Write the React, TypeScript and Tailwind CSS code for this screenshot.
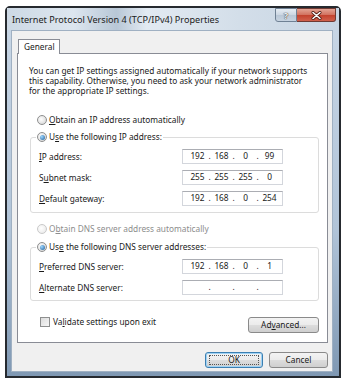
import React from "react";

function Radio({ checked = false, disabled = false }: { checked?: boolean; disabled?: boolean }) {
  return (
    <span
      className={
        disabled
          ? "flex items-center justify-center w-[10px] h-[10px] rounded-full border border-[#c9c9c9] bg-[radial-gradient(circle_at_40%_40%,#ffffff,#e6e6e6)] shrink-0"
          : "flex items-center justify-center w-[10px] h-[10px] rounded-full border border-[#8e8f8f] bg-[radial-gradient(circle_at_40%_40%,#ffffff,#cfcfcf)] shrink-0"
      }
    >
      {checked ? (
        <span className="w-[5px] h-[5px] rounded-full bg-[radial-gradient(circle_at_35%_35%,#9fd8ff,#1d5c9a)]" />
      ) : null}
    </span>
  );
}

function IpField({ parts }: { parts: string[] }) {
  return (
    <div className="w-[101px] h-[15px] border border-[#d3d6dc] border-t-[#abadb3] bg-white flex items-center pl-[4px] text-[8.3px] leading-none text-[#1a1a1a]">
      <span className="w-[21px] text-center">{parts[0]}</span>
      <span className="w-[3px] text-center">.</span>
      <span className="w-[21px] text-center">{parts[1]}</span>
      <span className="w-[3px] text-center">.</span>
      <span className="w-[21px] text-center">{parts[2]}</span>
      <span className="w-[3px] text-center">.</span>
      <span className="w-[21px] text-center">{parts[3]}</span>
    </div>
  );
}

function Row({ label, parts }: { label: React.ReactNode; parts: string[] }) {
  return (
    <div className="flex items-center h-[15px]">
      <span className="w-[143px] whitespace-nowrap">{label}</span>
      <IpField parts={parts} />
    </div>
  );
}

function Btn({ children, def = false, w }: { children: React.ReactNode; def?: boolean; w: string }) {
  return (
    <div
      className={
        (def
          ? "border-[#3c7fb1] shadow-[inset_0_0_0_1px_#9fd3f5] "
          : "border-[#8a8a8a] ") +
        "h-[16px] rounded-[3px] border bg-[linear-gradient(#f3f3f3,#ebebeb_50%,#dddddd_50%,#cfcfcf)] flex items-center justify-center text-[#1a1a1a] " +
        w
      }
    >
      {def ? (
        <span className="border border-dotted border-[#555] w-[calc(100%-6px)] h-[10px] flex items-center justify-center">
          {children}
        </span>
      ) : (
        children
      )}
    </div>
  );
}

export default function App() {
  return (
    <div className="w-[343px] h-[381px] bg-white pl-[5px] pt-[6px] overflow-hidden font-['Noto_Sans','Open_Sans',sans-serif] text-[8.3px] leading-[10px] text-[#1a1a1a]">
      <div className="w-[336px] h-[372px] border-2 border-[#262a2f] rounded-t-[5px] flex flex-col bg-[linear-gradient(180deg,#c9d7e6,#b1c4d8_60%,#7f98b3)]">
        {/* title bar */}
        <div className="h-[22px] flex items-start pl-[5px] pr-[3px] bg-[linear-gradient(90deg,#cdd9e5_0%,#dde6ef_20%,#b8c7d6_33%,#e2eaf2_42%,#d3dee9_70%,#c7d5e3_100%)]">
          <span className="mt-[6px] text-[9.1px] leading-[12px] text-[#1b1b1b] whitespace-nowrap">
            Internet Protocol Version 4 (TCP/IPv4) Properties
          </span>
          <div className="ml-auto flex">
            <div className="w-[22px] h-[14px] border border-[#6f8194] rounded-bl-[3px] bg-[linear-gradient(#e6edf4,#cbd6e2_50%,#b9c7d6_50%,#c8d4e1)] flex items-center justify-center text-[9px] font-bold leading-none text-[#f5f5f5] [text-shadow:0_0_1px_#333,0_0_1px_#333]">
              ?
            </div>
            <div className="w-[39px] h-[14px] border border-l-0 border-[#6f3a33] rounded-br-[3px] bg-[linear-gradient(#e3a394,#d1705e_50%,#c2412d_50%,#d0604c)] flex items-center justify-center">
              <svg width="11" height="9" viewBox="0 0 11 9">
                <path d="M2 1.5 L9 7.5 M9 1.5 L2 7.5" stroke="#4a1a12" strokeWidth="3" strokeLinecap="round" />
                <path d="M2 1.5 L9 7.5 M9 1.5 L2 7.5" stroke="#ffffff" strokeWidth="1.6" strokeLinecap="round" />
              </svg>
            </div>
          </div>
        </div>
        {/* client */}
        <div className="w-[322px] h-[342px] ml-[4px] bg-[#f0f0f0] border border-[#9fb0c2] pt-[8px] pl-[5px] flex flex-col">
          <div className="ml-[1px] -mb-[1px] w-[42px] h-[15px] border border-b-0 border-[#898c95] bg-white pl-[5px] flex items-center relative z-10">
            General
          </div>
          <div className="w-[311px] h-[290px] border border-[#898c95] bg-white pt-[12px] flex flex-col">
            <p className="ml-[11px] whitespace-nowrap">
              You can get IP settings assigned automatically if your network supports
              <br />
              this capability. Otherwise, you need to ask your network administrator
              <br />
              for the appropriate IP settings.
            </p>
            <div className="mt-[18px] ml-[19px] h-[12px] flex items-center gap-[2px]">
              <Radio />
              <span>
                <u>O</u>btain an IP address automatically
              </span>
            </div>
            <fieldset className="mt-[5px] ml-[12px] w-[289px] h-[82px] border border-[#dcdcdc] rounded-[3px]">
              <legend className="ml-[5px] px-[1px] h-[12px] flex items-center gap-[2px]">
                <Radio checked />
                <span>
                  U<u>s</u>e the following IP address:
                </span>
              </legend>
              <div className="mt-[6px] pl-[8px] flex flex-col gap-[6px]">
                <Row label={<><u>I</u>P address:</>} parts={["192", "168", "0", "99"]} />
                <Row label={<>S<u>u</u>bnet mask:</>} parts={["255", "255", "255", "0"]} />
                <Row label={<><u>D</u>efault gateway:</>} parts={["192", "168", "0", "254"]} />
              </div>
            </fieldset>
            <div className="mt-[10px] ml-[19px] h-[12px] flex items-center gap-[2px] text-[#8d8d8d]">
              <Radio disabled />
              <span>
                O<u>b</u>tain DNS server address automatically
              </span>
            </div>
            <fieldset className="mt-[6px] ml-[12px] w-[289px] h-[60px] border border-[#dcdcdc] rounded-[3px]">
              <legend className="ml-[5px] px-[1px] h-[12px] flex items-center gap-[2px]">
                <Radio checked />
                <span>
                  Us<u>e</u> the following DNS server addresses:
                </span>
              </legend>
              <div className="mt-[6px] pl-[8px] flex flex-col gap-[6px]">
                <Row label={<><u>P</u>referred DNS server:</>} parts={["192", "168", "0", "1"]} />
                <Row label={<><u>A</u>lternate DNS server:</>} parts={["", "", "", ""]} />
              </div>
            </fieldset>
            <div className="mt-[16px] ml-[22px] mr-[8px] flex items-start">
              <span className="w-[10px] h-[10px] border border-[#8e8f8f] bg-[linear-gradient(135deg,#dcdcdc,#f6f6f6)]" />
              <span className="ml-[3px] leading-[10px]">
                Va<u>l</u>idate settings upon exit
              </span>
              <div className="ml-auto">
                <Btn w="w-[71px]">
                  <span>
                    Ad<u>v</u>anced...
                  </span>
                </Btn>
              </div>
            </div>
          </div>
          <div className="mt-[9px] w-[311px] flex justify-end gap-[6px]">
            <Btn def w="w-[58px]">OK</Btn>
            <Btn w="w-[59px]">Cancel</Btn>
          </div>
        </div>
      </div>
    </div>
  );
}
